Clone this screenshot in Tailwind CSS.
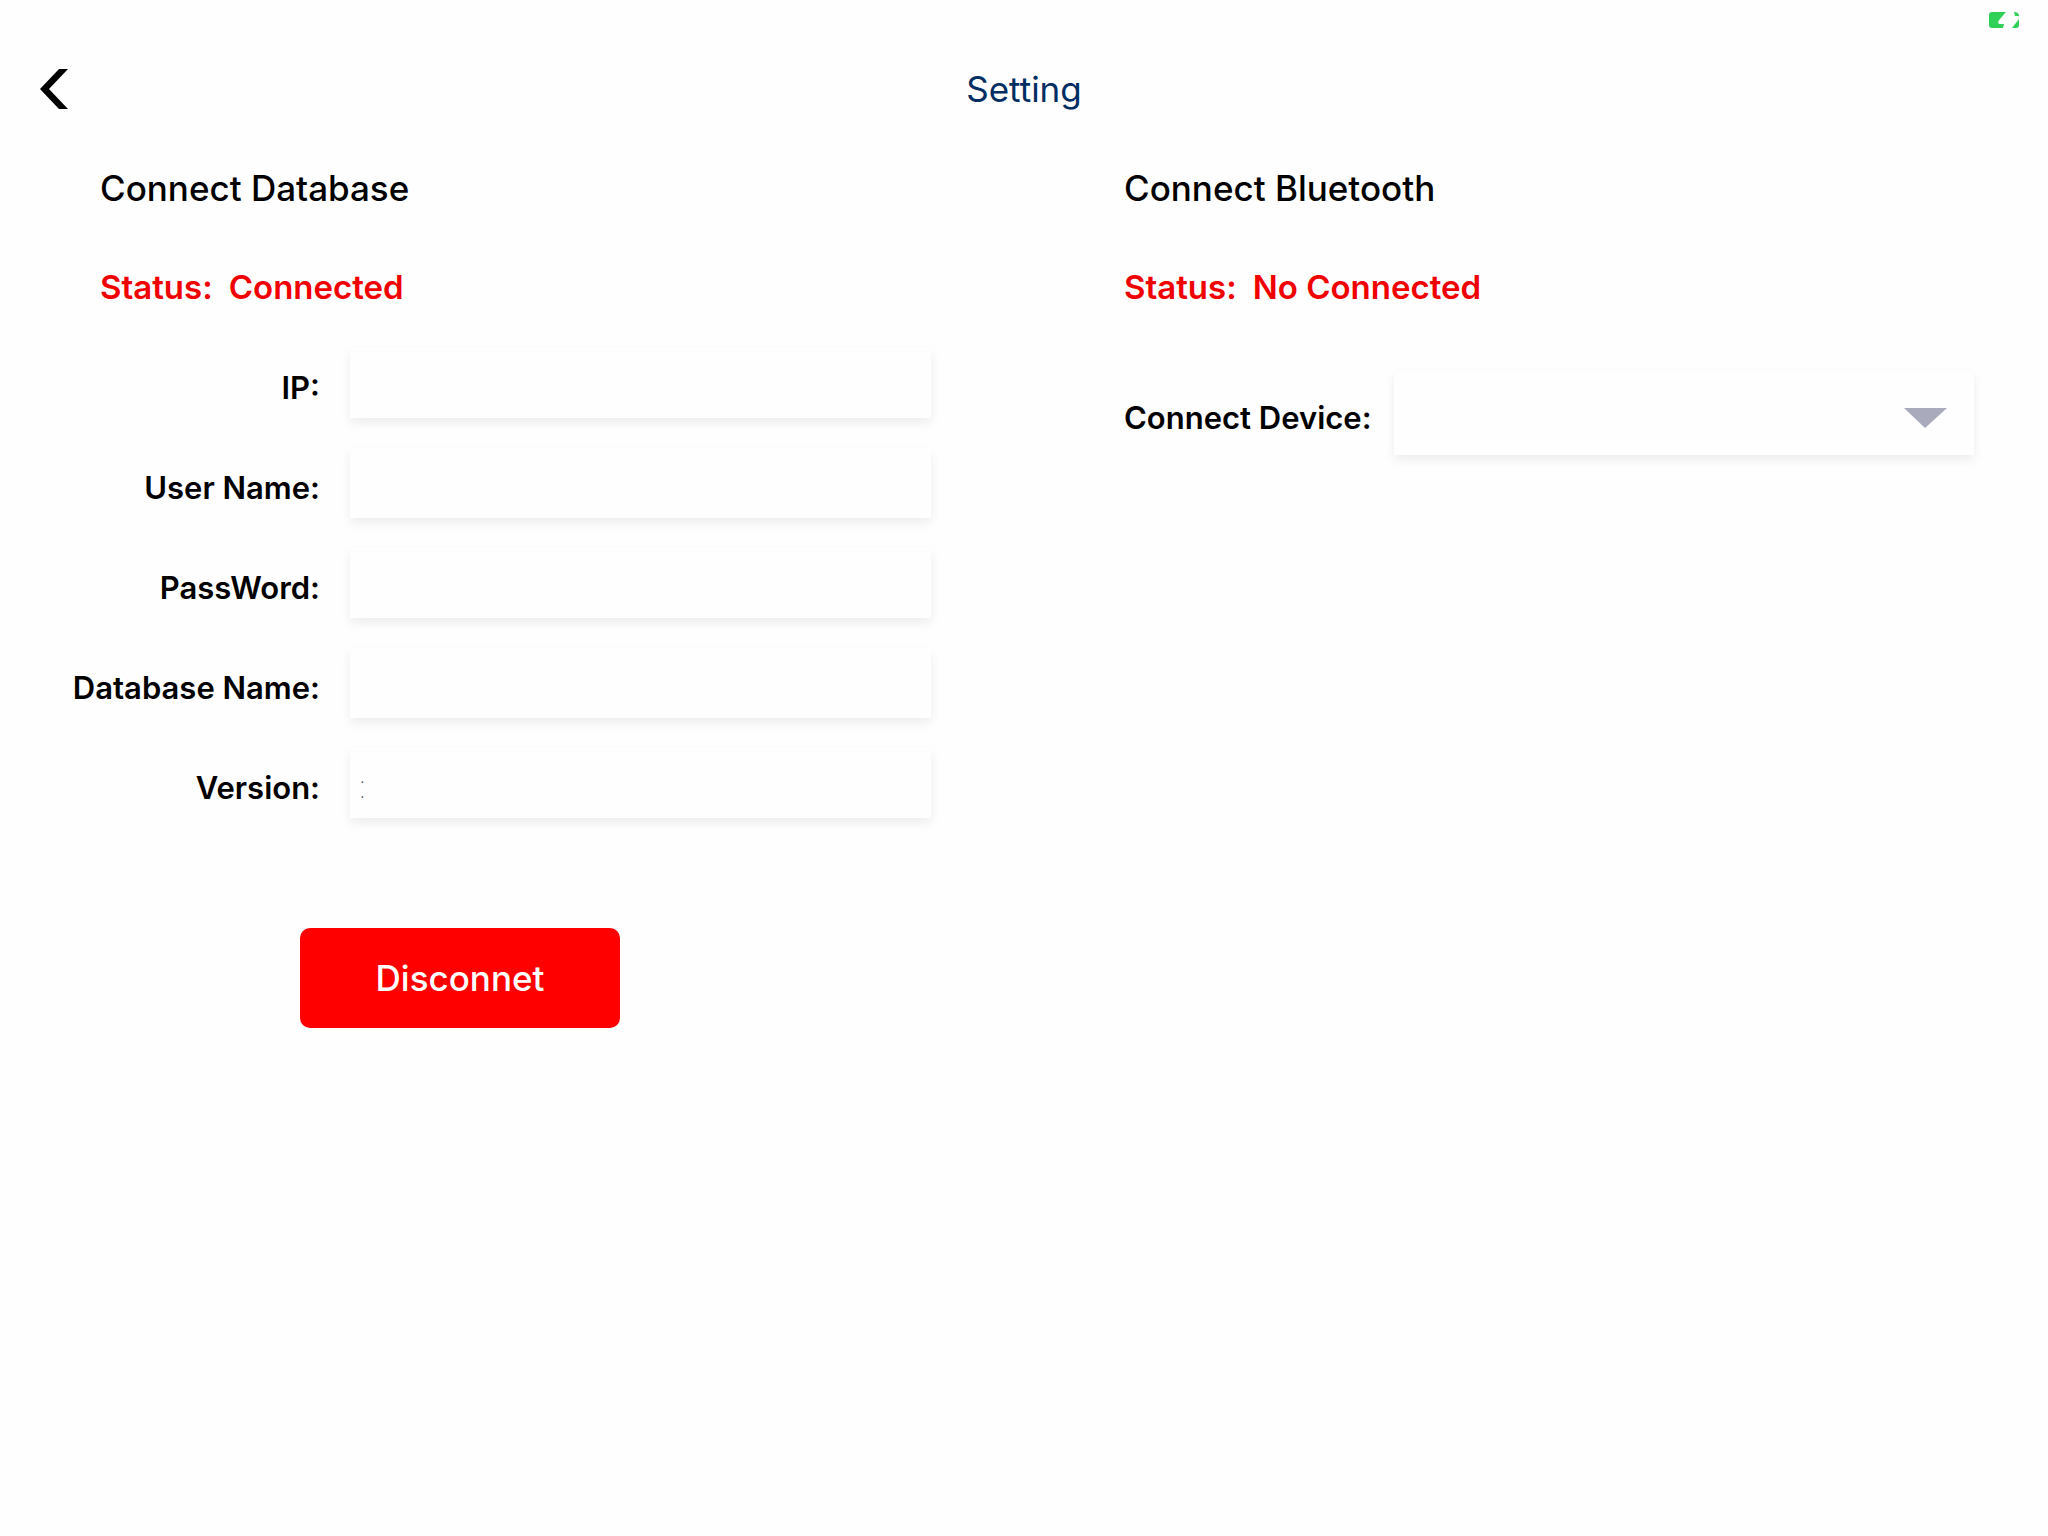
<!DOCTYPE html>
<html lang="en">
<head>
<meta charset="utf-8">
<meta name="viewport" content="width=device-width, initial-scale=1">
<title>Setting</title>
<script src="https://cdn.jsdelivr.net/npm/@tailwindcss/browser@4"></script>
</head>
<body class="min-h-screen bg-[#fefefe] font-['Inter','Liberation_Sans',sans-serif] font-semibold text-black">
  <!-- Status bar -->
  <div class="flex h-10 items-center justify-end pr-7">
    <svg class="h-4 w-8" viewBox="0 0 32 16" role="img" aria-label="Battery charging">
      <path d="M4 0H18L12 7Q9 10 11 12H16L15 16H4Q1 16 1 13V3Q1 0 4 0Z" fill="#30d158"/>
      <path d="M26 0Q31 0 31 4L27 4Z" fill="#30d158"/>
      <path d="M31 7V13Q31 16 28 16H24Z" fill="#30d158"/>
    </svg>
  </div>

  <header class="grid h-[98px] grid-cols-[1fr_auto_1fr] items-center px-10">
    <button type="button" aria-label="Back" class="w-7">
      <svg class="h-10 w-7" viewBox="0 0 28 40"><path d="M19 0H28L9 20L28 40H19L0 20Z" fill="#000"/></svg>
    </button>
    <h1 class="text-[35px] font-normal text-[#002d62]">Setting</h1>
  </header>

  <main class="grid grid-cols-2">
    <section>
      <h2 class="flex h-[100px] items-center pl-[100px] text-[35px] font-medium">Connect Database</h2>
      <p class="flex h-[100px] items-center gap-4 pl-[100px] text-[33px] text-[#f00000]"><span>Status:</span><span>Connected</span></p>
      <form>
        <div class="flex h-[100px] items-center gap-[30px] pr-[93px]">
          <label for="ip" class="w-[320px] text-right text-[31px]">IP:</label>
          <input id="ip" type="text" class="mb-[10px] h-[70px] min-w-0 flex-1 bg-[#fefefe] px-2 text-[32px] shadow-[0_5px_10px_rgba(0,0,0,0.07)] outline-none">
        </div>
        <div class="flex h-[100px] items-center gap-[30px] pr-[93px]">
          <label for="user" class="w-[320px] text-right text-[31px]">User Name:</label>
          <input id="user" type="text" class="mb-[10px] h-[70px] min-w-0 flex-1 bg-[#fefefe] px-2 text-[32px] shadow-[0_5px_10px_rgba(0,0,0,0.07)] outline-none">
        </div>
        <div class="flex h-[100px] items-center gap-[30px] pr-[93px]">
          <label for="password" class="w-[320px] text-right text-[31px]">PassWord:</label>
          <input id="password" type="password" class="mb-[10px] h-[70px] min-w-0 flex-1 bg-[#fefefe] px-2 text-[32px] shadow-[0_5px_10px_rgba(0,0,0,0.07)] outline-none">
        </div>
        <div class="flex h-[100px] items-center gap-[30px] pr-[93px]">
          <label for="database" class="w-[320px] text-right text-[31px]">Database Name:</label>
          <input id="database" type="text" class="mb-[10px] h-[70px] min-w-0 flex-1 bg-[#fefefe] px-2 text-[32px] shadow-[0_5px_10px_rgba(0,0,0,0.07)] outline-none">
        </div>
        <div class="flex h-[100px] items-center gap-[30px] pr-[93px]">
          <label for="version" class="w-[320px] text-right text-[31px]">Version:</label>
          <input id="version" type="text" value=":" class="mb-[10px] h-[70px] min-w-0 flex-1 bg-[#fefefe] px-2 pt-1.5 text-[32px] font-thin text-gray-600 shadow-[0_5px_10px_rgba(0,0,0,0.07)] outline-none">
        </div>
        <button type="button" class="mt-[90px] ml-[300px] h-[100px] w-[320px] rounded-[10px] bg-[#ff0000] text-[35px] font-medium text-white">Disconnet</button>
      </form>
    </section>

    <section>
      <h2 class="flex h-[100px] items-center pl-[100px] text-[35px] font-medium">Connect Bluetooth</h2>
      <p class="flex h-[100px] items-center gap-4 pl-[100px] text-[33px] text-[#f00000]"><span>Status:</span><span>No Connected</span></p>
      <div class="flex h-[160px] items-center pr-[74px] pl-[100px]">
        <label for="device" class="w-[270px] text-[31px] whitespace-nowrap">Connect Device:</label>
        <div class="relative mb-[10px] flex-1">
          <select id="device" class="block h-[84px] w-full appearance-none bg-[#fefefe] px-3 text-[32px] shadow-[0_5px_10px_rgba(0,0,0,0.07)] outline-none"><option></option></select>
          <svg class="pointer-events-none absolute right-[27px] bottom-[27px] h-5 w-11" viewBox="0 0 44 20"><path d="M1 0H44L22 20Z" fill="#a9abbc"/></svg>
        </div>
      </div>
    </section>
  </main>
</body>
</html>
